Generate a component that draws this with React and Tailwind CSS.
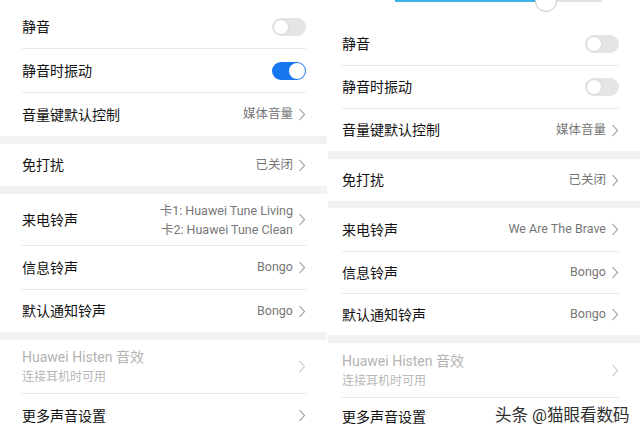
const font = { fontFamily: 'Roboto, "Noto Sans CJK SC", sans-serif' };

const Chevron = ({ light }) => (
  <svg width="8" height="13" viewBox="0 0 8 13" className="ml-[5px] shrink-0">
    <path d="M1.5 1 L6.5 6.5 L1.5 12" fill="none" stroke={light ? '#c4c4c4' : '#959595'} strokeWidth="1.1" />
  </svg>
);

const Toggle = ({ on }) =>
  on ? (
    <div className="w-[34px] h-[18px] rounded-full bg-[#1677f0] flex items-center justify-end pr-[1px]">
      <div className="w-[16px] h-[16px] rounded-full bg-white" />
    </div>
  ) : (
    <div className="w-[34px] h-[18px] rounded-full bg-[#e4e4e4] flex items-center pl-[1px]">
      <div className="w-[16px] h-[16px] rounded-full bg-white border border-[#dadada]" />
    </div>
  );

const Row = ({ title, value, lines, toggle, on, sub, disabled, h, divider }) => (
  <div className={`flex items-center ${h} ${divider ? 'border-b border-[#e8e8e8]' : ''}`}>
    <div className="flex-1 flex flex-col">
      <span className={`text-[14px] leading-[18px] ${disabled ? 'text-[#b3b3b3]' : 'text-[#111111]'}`}>{title}</span>
      {sub && <span className="text-[12px] leading-[16px] mt-[3px] text-[#b8b8b8]">{sub}</span>}
    </div>
    {toggle ? (
      <Toggle on={on} />
    ) : (
      <div className="flex items-center">
        {value && <span className="text-[12.5px] text-[#777777]">{value}</span>}
        {lines && (
          <div className="flex flex-col items-end text-[12.5px] leading-[19px] text-[#777777]">
            {lines.map((l) => (
              <span key={l}>{l}</span>
            ))}
          </div>
        )}
        <Chevron light={disabled} />
      </div>
    )}
  </div>
);

const Band = ({ h }) => <div className={`${h} bg-[#f2f2f2]`} />;

export default function App() {
  return (
    <div className="relative w-[640px] h-[437px] bg-white flex overflow-hidden" style={font}>
      {/* 左边截图 */}
      <div className="w-[327px] h-full flex flex-col pt-[5px]">
        <div className="pl-[22px] pr-[21px]">
          <Row title="静音" toggle h="h-[44px]" divider />
          <Row title="静音时振动" toggle on h="h-[44px]" divider />
          <Row title="音量键默认控制" value="媒体音量" h="h-[43px]" />
        </div>
        <Band h="h-[8px]" />
        <div className="pl-[22px] pr-[21px]">
          <Row title="免打扰" value="已关闭" h="h-[42px]" />
        </div>
        <Band h="h-[8px]" />
        <div className="pl-[22px] pr-[21px]">
          <Row title="来电铃声" lines={['卡1: Huawei Tune Living', '卡2: Huawei Tune Clean']} h="h-[52px]" divider />
          <Row title="信息铃声" value="Bongo" h="h-[44px]" divider />
          <Row title="默认通知铃声" value="Bongo" h="h-[42px]" />
        </div>
        <Band h="h-[8px]" />
        <div className="pl-[22px] pr-[21px]">
          <Row title="Huawei Histen 音效" sub="连接耳机时可用" disabled h="h-[54px]" divider />
          <Row title="更多声音设置" h="h-[43px]" />
        </div>
      </div>

      <div className="w-[1px] bg-white" />

      {/* 右边截图 */}
      <div className="flex-1 h-full flex flex-col">
        <div className="relative h-[22px]">
          <div className="ml-[67px] w-[207px] h-[2px] flex">
            <div className="w-[151px] bg-[#3ab5e6]" />
            <div className="flex-1 bg-[#e2e2e2]" />
          </div>
          <div className="absolute left-[207px] top-[-10px] w-[22px] h-[22px] rounded-full bg-white border border-[#c8c8c8]" />
        </div>
        <div className="pl-[14px] pr-[21px]">
          <Row title="静音" toggle h="h-[44px]" divider />
          <Row title="静音时振动" toggle h="h-[43px]" divider />
          <Row title="音量键默认控制" value="媒体音量" h="h-[42px]" />
        </div>
        <Band h="h-[8px]" />
        <div className="pl-[14px] pr-[21px]">
          <Row title="免打扰" value="已关闭" h="h-[42px]" />
        </div>
        <Band h="h-[7px]" />
        <div className="pl-[14px] pr-[21px]">
          <Row title="来电铃声" value="We Are The Brave" h="h-[44px]" divider />
          <Row title="信息铃声" value="Bongo" h="h-[42px]" divider />
          <Row title="默认通知铃声" value="Bongo" h="h-[41px]" />
        </div>
        <Band h="h-[8px]" />
        <div className="pl-[14px] pr-[21px]">
          <Row title="Huawei Histen 音效" sub="连接耳机时可用" disabled h="h-[55px]" divider />
          <Row title="更多声音设置" h="h-[38px]" />
        </div>
      </div>

      {/* 水印 */}
      <div
        className="absolute left-[495px] top-[405px] text-[16.5px] leading-[22px] text-[#2e2e2e] whitespace-nowrap"
        style={{ textShadow: '0 0 2px #fff, 0 0 2px #fff, 0 0 1px #fff' }}
      >
        头条 @猫眼看数码
      </div>
    </div>
  );
}
